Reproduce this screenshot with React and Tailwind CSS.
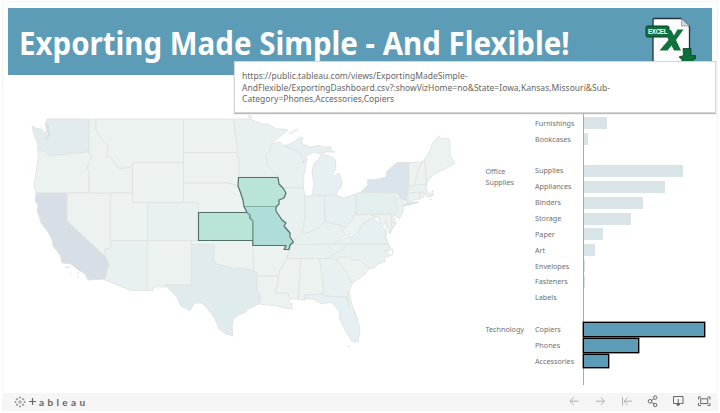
import clsx from "clsx";

const states = [
  { id: "WA", fill: "#e2ebee", d: "32,126 37,128.5 42,129 45,134 47,130 45,125 47,119 89,119 89,152 84,152.5 72,153 62,155 55,155 50,157 46,152 38,150 37,142 34,135" },
  { id: "OR", fill: "#ecf2f0", d: "38,150 46,152 50,157 55,155 62,155 72,153 84,152.5 89,152 92,156 87,168 89,172 89,193 36,193 34,186 36,172 38,160" },
  { id: "CA", fill: "#d8dee5", d: "36,193 67,193 67,221 106,257 109.5,265 107,270 107,279 88,280 85,274 78,270 71,264 62,263 60,255 53,246 52,240 48,232 41,223 39,216 37,211 38,206 35,200" },
  { id: "NV", fill: "#ecf2f0", d: "67,193 110.5,193 110.5,248 105,249 106,257 67,221" },
  { id: "ID", fill: "#ecf2f0", d: "89,119 96,119 96,130 101,138 108,146 107,157 110,156 118,168 124,168 132,166 132,193 89,193 89,172 87,168 92,156 89,152" },
  { id: "MT", fill: "#ecf2f0", d: "96,119 183.5,119 183.5,162.5 132.5,162.5 132,167 124,168 118,168 110,156 107,157 108,146 101,138 96,130" },
  { id: "WY", fill: "#ecf2f0", d: "132.5,162.5 183.5,162.5 183.5,202.5 132.5,202.5" },
  { id: "UT", fill: "#ecf2f0", d: "110.5,193 132.5,193 132.5,202.5 147.5,202.5 147.5,240.5 110.5,240.5" },
  { id: "CO", fill: "#e9f0f1", d: "147.5,202.5 198.5,202.5 198.5,240.5 147.5,240.5" },
  { id: "AZ", fill: "#e9f0f1", d: "110.5,240.5 147.5,240.5 147.5,290.5 131,290.5 105,280 107,270 109.5,265 106,257 105,249 110.5,248" },
  { id: "NM", fill: "#ecf2f0", d: "147.5,240.5 191.5,240.5 191.5,285 165,285 166,287 153.5,287 153.5,290.5 147.5,290.5" },
  { id: "ND", fill: "#ecf2f0", d: "183.5,119 233.5,119 236,138 238,152.5 183.5,152.5" },
  { id: "SD", fill: "#ecf2f0", d: "183.5,152.5 238,152.5 237,156 239,159 239,177 238,186 232,184 225,183 183.5,183" },
  { id: "NE", fill: "#ecf2f0", d: "183.5,183 225,183 232,184 238,186 242,198 247,212 198.5,212 198.5,202.5 183.5,202.5" },
  { id: "OK", fill: "#ecf2f0", d: "191.5,240.5 252.5,240.5 254,252 254,270.5 249,270 240,268 234,269 228,267 220,265 214,263 214,244.5 191.5,244.5" },
  { id: "TX", fill: "#dfebed", d: "191.5,244.5 214,244.5 214,263 220,265 228,267 234,269 240,268 249,269 256.5,272 257,290 261,296 259,304 250,308 244,313 238,315 233,320 232,327 233,336 226,334 219,329 215,319 207,308 202,303 195,303 190,310.5 181,306 177,297 165,285 191.5,285" },
  { id: "MN", fill: "#e9f0f1", d: "233.5,119 249,119 249,115 251,116 252,120 262,124 268,124 276,129 284,129 288,130 278,138 271,144 270,151 266,155 267,165 278,177 239,177 239,159 237,156 238,152 236,138" },
  { id: "WI", fill: "#e9f0f1", d: "271,144 280,142 284,146 295,150 301,154 303,160 303,163 307,158 304,175 303.5,188 284,188 279,183 278,176 267,165 266,155 270,151" },
  { id: "MI-upper", fill: "#e6eff1", d: "284,146 294,142 300,137 303,138 301,143 310,147 320,145 322,147 331,147 331,151 335,152 326,152 320,154 314,152 306,156 303,163 301,154 295,150" },
  { id: "MI-lower", fill: "#e6eff1", d: "312,195 314,185 312,172 314,163 318,160 322,154 329,156 335,159 336,168 332,175 334,176 339,173 342,182 341,187 338,190 336,195 324.5,196" },
  { id: "IL", fill: "#e9f0f1", d: "284,188 303.5,188 305,196 305,214 304,225 301,233 294,240 290,233 284,222 276,211 276,206 279,200 285,197 286,193" },
  { id: "IN", fill: "#e9f0f1", d: "305,196 324.5,195.5 325,221 318,228 310,232 302,234 304,225 305,214" },
  { id: "OH", fill: "#e6eff1", d: "324.5,195.5 336,195 343,198 350,196 356,193.5 356,210 352,220 345,228 340,225 332,224 325,221" },
  { id: "KY", fill: "#e9f0f1", d: "292,243 295,240 302,234 310,232 318,228 325,221 332,224 340,225 345,235 338,241 333,244 292,245" },
  { id: "TN", fill: "#e9f0f1", d: "292,244.5 347,244 344,249 334,254 328,258.5 287,258.5 289,249" },
  { id: "AR", fill: "#ecf2f0", d: "252.5,245 286,245 284,249.5 289,249.5 286,260 280,270 279,276 257,276 256.5,272 254,271" },
  { id: "LA", fill: "#ecf2f0", d: "257,276 279,276 278,284 275,293 288,293 290,299 288,302 293,304 291,306 293,309 285,308 277,306 268,305 259,304 261,296 257,290" },
  { id: "MS", fill: "#ecf2f0", d: "287,258.5 301,258.5 298,299 290,299 288,293 275,293 278,284 279,272 283,265" },
  { id: "AL", fill: "#ecf2f0", d: "301,258.5 319.5,258.5 323,280 323,294 304,295 305,300 298.5,300" },
  { id: "GA", fill: "#e9f0f1", d: "319.5,258.5 337,258.5 345,270 353,282 349,292 347,297 324,296 323,280" },
  { id: "FL", fill: "#e6eff1", d: "304,295 323,294 324,296 347,297 349,292 352,305 357,318 360,329 358,341.7 352.5,342 346,332 340,320 339,311 331,302 322,304 313,299 305,299" },
  { id: "SC", fill: "#ecf2f0", d: "336,260 340,257 350,257 352,260 360,260 370,268.5 364,275 352,283 345,270" },
  { id: "NC", fill: "#e9f0f1", d: "328,258.5 334,254 344,249 347,244 389,244 391,250 385,252 390,254 384,259 386,261 378,264 374,268 370,268.5 360,260 352,260 350,257 340,257 336,259" },
  { id: "VA", fill: "#e6eff1", d: "333,244 346,237 352,238 358,232 362,224 368,220 373,218 380,224 386,230 385,236 388,244" },
  { id: "WV", fill: "#ecf2f0", d: "340,225 345,228 352,220 356,212 356,215 370,214 377,217 373,218 368,220 362,224 358,232 352,238 345,235" },
  { id: "PA", fill: "#e3eeee", d: "356,193.5 361,192 393,192.5 398,198 395,204 399,209 394,214 356,214.5" },
  { id: "MD", fill: "#ecf2f0", d: "370,214.5 391,214 392,222 395,223 392,228 390,234 387,226 386,219 384,225 380,223 378,217" },
  { id: "DE", fill: "#ecf2f0", d: "391,214 393,215 396,224 392,222" },
  { id: "NJ", fill: "#e9f0f1", d: "398,198 404,202 403,212 399,219 394,215 399,209 395,204" },
  { id: "NY", fill: "#d9e4eb", d: "361,192 368,185 367,180 379,179 386,177 387,171 397,162.5 409,162.5 409,180 407.5,193 407,202 400,198 396,193" },
  { id: "Long Island", fill: "#d9e4eb", d: "402,206 408,202 419,202 410,205" },
  { id: "VT", fill: "#ecf2f0", d: "409,162.5 422,162 417,174 415,185.5 409,186" },
  { id: "NH", fill: "#ecf2f0", d: "422,162 425,159 426,180 427,184 415,185.5 417,174" },
  { id: "MA", fill: "#e9f0f1", d: "408.5,186 427,184 426,188 429,194 433,193 433,196 427,197 424,192 408,193" },
  { id: "CT", fill: "#ecf2f0", d: "408,193 420,192.5 420,199 408,201" },
  { id: "RI", fill: "#ecf2f0", d: "420,192.5 424,192.5 424,197 420,199" },
  { id: "ME", fill: "#ecf2f0", d: "425,159 430,150 433,142 439,136.5 442,139 448,138 450,141 450,155 455,163 449,167 443,170 436,173 430,178 427,183 426,175" },
];

const selectedStates = [
  { id: "KS", fill: "#bbe4d8", d: "198.5,212.5 247,212.5 250,215 250,218 253,221 253,240.5 198.5,240.5" },
  { id: "IA", fill: "#bbe4d8", d: "238.5,177.5 278,177.5 279,184 283,188 286,193 284,198 279,200 279,204 276,207 244,206.5 243,200 240,191 238,186" },
  { id: "MO", fill: "#afddd7", d: "244,206.5 276,206.5 276,211 282,220 286,223 284,226 290,233 290,237 293.5,242 290,245 289,249.5 284,249.5 286,245.5 252.8,245.5 252.8,221 250,218 250,215 247,212.5" },
];

const categories = [
  {
    name: "",
    items: [
      { name: "Chairs", value: 32 },
      { name: "Furnishings", value: 23 },
      { name: "Bookcases", value: 4 },
    ],
  },
  {
    name: "Office Supplies",
    items: [
      { name: "Supplies", value: 99 },
      { name: "Appliances", value: 81.5 },
      { name: "Binders", value: 59 },
      { name: "Storage", value: 47 },
      { name: "Paper", value: 19 },
      { name: "Art", value: 11.5 },
      { name: "Envelopes", value: 1.2 },
      { name: "Fasteners", value: 0.6 },
      { name: "Labels", value: 0 },
    ],
  },
  {
    name: "Technology",
    selected: true,
    items: [
      { name: "Copiers", value: 122 },
      { name: "Phones", value: 56 },
      { name: "Accessories", value: 26 },
    ],
  },
];

function ExcelIcon() {
  return (
    <svg viewBox="644 17 52 48" className="h-[48px] w-[52px]">
      <path d="M654 19.5h27l8.500 8V65H653V20.500z" fill="#fdfdfd" stroke="#26313c" strokeWidth="1.3" />
      <path d="M681.500 19.500v7.500h8z" fill="#d3d5d9" stroke="#7b838c" strokeWidth=".6" />
      <rect x="646" y="27" width="23" height="11" rx="1.500" fill="#10713c" stroke="#0c3d2b" strokeWidth="1" />
      <path d="M664.500 31H671L674 36.500L677.500 30.500H683.500L676 41L681 51.500H674L671.500 46.500L667.500 51.500H659.500L668.500 41z" fill="#10713c" />
      <path d="M683 49.500h8v7h4.500V60H693v5h-11v-4.500L679 58l4.500-1.500z" fill="#0b7037" stroke="#0c3d2b" strokeWidth=".8" />
      <text x="648" y="34.900" fill="#fff" fontFamily="Liberation Sans, sans-serif" fontWeight="700" fontSize="6.300" textLength="19.500">
        EXCEL
      </text>
    </svg>
  );
}

function Header() {
  return (
    <header className="mx-[5px] mt-[6px] flex h-[66.500px] shrink-0 items-start justify-between bg-[#5c9cb7] pr-4 pl-[11px]">
      <h1 className="mt-[12px] w-[560px] origin-left scale-x-[.921] text-[32px] leading-[46px] font-bold whitespace-nowrap text-white">
        Exporting Made Simple - And Flexible!
      </h1>
      <div className="mt-[8px]">
        <ExcelIcon />
      </div>
    </header>
  );
}

function UrlTooltip() {
  return (
    <div className="absolute top-[61px] left-[234px] h-[52px] w-[482px] border border-[#d4d4d4] bg-white pt-[8px] pl-[7px] text-[8.500px] leading-[11.700px] tracking-[.02px] whitespace-nowrap text-[#666] shadow-[0_1px_1px_#bbb]">
      <p>https://public.tableau.com/views/ExportingMadeSimple-</p>
      <p>AndFlexible/ExportingDashboard.csv?:showVizHome=no&amp;State=Iowa,Kansas,Missouri&amp;Sub-</p>
      <p>Category=Phones,Accessories,Copiers</p>
    </div>
  );
}

function StateMap() {
  return (
    <svg viewBox="3 75 477 318" className="h-[318px] w-[477px] shrink-0" strokeLinejoin="round">
      {states.map((state) => (
        <polygon key={state.id} points={state.d} fill={state.fill} stroke="#dfe1e1" strokeWidth=".8" />
      ))}
      {/* Puget Sound and the small islands */}
      <path d="M46 123l2 4-2 3 3 3-2 6-3-1M48 125l2 8-1 5M65 267l5 .5M70 273l1 1M77 272l2 1M77 276l2 2M48 230l2 4" fill="none" stroke="#d7dadb" strokeWidth=".9" />
      {/* Chesapeake and Outer Banks */}
      <path d="M386 221l1 7-2 2 2 4-2 3 3 4M390 221l2 6-2 7M392 248l1 6-5 3M383 251l5-1M347 297l1 5 1 5M354 310l2 7M347 347l3-1M429 200l3-1M432 193l1-3M395 224l-2 5" fill="none" stroke="#dcdfdf" strokeWidth=".9" />
      <path d="M289 133l9-4-6 5z" fill="#fff" stroke="#dedfdf" strokeWidth=".7" />
      {selectedStates.map((state) => (
        <polygon key={state.id} points={state.d} fill={state.fill} stroke="#54706b" strokeWidth="1.200" />
      ))}
      <path d="M244.500 206.500H276M252.800 240V221L250 218V215L247 212.500" fill="none" stroke="#86aca4" strokeWidth="1.200" />
    </svg>
  );
}

function BarRow({ item, selected }) {
  return (
    <div className="flex h-[15.850px] items-center">
      <span className={clsx("shrink-0", selected ? "w-[48px]" : "w-[48.500px]")}>{item.name}</span>
      {item.value > 0 && (
        <div
          className={clsx(
            selected ? "h-[14.500px] border-[1.500px] border-black bg-[#5c9cb7] shadow-[0_0_0_.4px_#000]" : "h-[12px] bg-[#d8e4e8]"
          )}
          style={{ width: item.value }}
        />
      )}
    </div>
  );
}

function SalesChart() {
  return (
    <div className="flex h-[310px] flex-1 flex-col gap-[15.850px] bg-[linear-gradient(#a5acad,#a5acad)] bg-[length:1px_100%] bg-[position:103px_0] bg-no-repeat pt-[24.700px] pl-[5.500px] text-[7.200px] leading-[11px] text-[#707070]">
      {categories.map((category) => (
        <div key={category.name} className="flex">
          <div className="w-[49.500px] shrink-0 pt-[2.500px]">{category.name}</div>
          <div>
            {category.items.map((item) => (
              <BarRow key={item.name} item={item} selected={category.selected} />
            ))}
          </div>
        </div>
      ))}
    </div>
  );
}

function TableauLogo() {
  return (
    <div className="flex items-center text-[#666]">
      <svg viewBox="0 0 12 12" className="h-[12px] w-[12px]" fill="none" stroke="currentColor" strokeWidth=".6">
        <path d="M6 4v4M4 6h4M6 .5v2M5 1.500h2M6 9.500v2M5 10.500h2M.5 6h2M1.500 5v2M9.500 6h2M10.500 5v2M3 2v2.400M1.800 3.200h2.400M9 2v2.400M7.800 3.200h2.400M3 7.600V10M1.800 8.800h2.400M9 7.600V10M7.800 8.800h2.400" />
      </svg>
      <svg viewBox="0 0 7 7" className="ml-[3px] h-[7px] w-[7px]" stroke="currentColor" strokeWidth="1.200">
        <path d="M3.500 0v7M0 3.500h7" />
      </svg>
      <span className="ml-[3px] font-['Lato',sans-serif] text-[10px] leading-[12px] font-bold tracking-[3.350px]">
        ableau
      </span>
    </div>
  );
}

function Toolbar() {
  return (
    <footer className="flex h-[17px] shrink-0 items-center justify-between bg-[#f5f5f5] pr-[6px] pl-[11px]">
      <TableauLogo />
      <svg viewBox="568 393 143 17" className="h-[17px] w-[143px]" fill="none" stroke="#666" strokeWidth="1">
        <g stroke="#b0b0b0">
          <path d="M578.500 401.200H570M573.800 397.500l-3.800 3.700 3.800 3.700" />
          <path d="M596 401.200h8.500M600.700 397.500l3.800 3.700-3.800 3.700" />
          <path d="M622.500 397v8.500M632 401.200h-8M627.800 397.500l-3.800 3.700 3.800 3.700" />
        </g>
        <circle cx="650" cy="401.300" r="1.800" />
        <circle cx="655.200" cy="397.600" r="1.700" />
        <circle cx="655.200" cy="405" r="1.700" />
        <path d="M651.600 400.300l2.200-1.400M651.600 402.300l2.200 1.400" />
        <path d="M676 403.500h-2.500V396.500h9.500v7H680.500M678.200 399v6" />
        <path d="M676.200 403.500h4l-2 2.500z" fill="#666" />
        <path d="M698.500 399.500v-2.500h2.500M707.500 397h2.500v2.500M710 403v2.500h-2.500M701 405.500h-2.500V403" />
        <rect x="700.700" y="398.800" width="7" height="4.800" />
      </svg>
    </footer>
  );
}

export default function App() {
  return (
    <div className="relative h-[413px] w-[720px] overflow-hidden bg-white pt-[2px] pl-[3px] font-['Noto_Sans',sans-serif]">
      <div className="flex h-[408px] w-[714px] flex-col shadow-[0_0_0_1px_#f6f6f6]">
        <Header />
        <main className="mt-[.5px] flex h-[318px] shrink-0">
          <StateMap />
          <SalesChart />
        </main>
        <Toolbar />
      </div>
      <UrlTooltip />
    </div>
  );
}
